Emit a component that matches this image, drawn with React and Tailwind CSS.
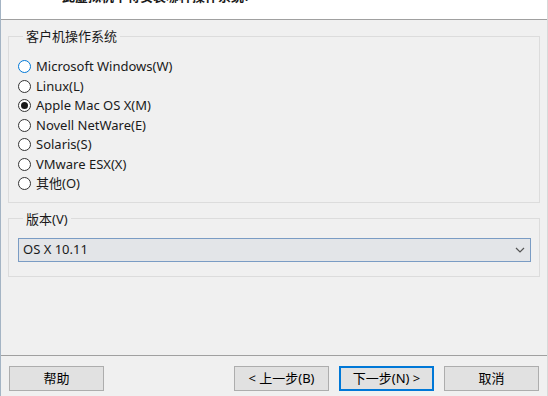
import React from "react";

const font = { fontFamily: '"Noto Sans", "Noto Sans CJK SC", sans-serif' };

function Radio({ label, checked, hover }) {
  return (
    <div className="flex items-center h-[19.5px]">
      <span
        className={`w-[13px] h-[13px] rounded-full border bg-white flex items-center justify-center ${
          hover ? "border-[#0078d7]" : "border-[#333333]"
        }`}
      >
        {checked && <span className="w-[7px] h-[7px] rounded-full bg-[#1a1a1a]" />}
      </span>
      <span className="ml-[5px] text-[13px] text-[#1a1a1a] leading-none">{label}</span>
    </div>
  );
}

function Btn({ children, primary }) {
  return (
    <button
      className={`w-[95px] h-[25px] bg-[#e1e1e1] text-[13px] text-black leading-none flex items-center justify-center ${
        primary ? "border-2 border-[#0078d7]" : "border border-[#adadad]"
      }`}
    >
      {children}
    </button>
  );
}

export default function App() {
  return (
    <div
      className="w-[548px] h-[396px] bg-[#f0f0f0] border-l border-[#a4b4c4] border-r border-r-[#d8d8d8] flex flex-col overflow-hidden"
      style={font}
    >
      <div className="h-[20px] bg-white border-b border-[#a0a0a0] overflow-hidden pl-[61px]">
        <div className="text-[13px] font-semibold text-[#1a1a1a] leading-[16px] -mt-[12px] whitespace-nowrap">
          此虚拟机中将安装哪种操作系统?
        </div>
      </div>

      <div className="px-[7px]">
        <fieldset className="mt-[8px] border border-[#dcdcdc] pl-[9px] pt-[13px] pb-[8px]">
          <legend className="ml-[5px] px-[3px] text-[13px] leading-[16px] text-[#1a1a1a]">
            客户机操作系统
          </legend>
          <Radio label="Microsoft Windows(W)" hover />
          <Radio label="Linux(L)" />
          <Radio label="Apple Mac OS X(M)" checked />
          <Radio label="Novell NetWare(E)" />
          <Radio label="Solaris(S)" />
          <Radio label="VMware ESX(X)" />
          <Radio label="其他(O)" />
        </fieldset>

        <fieldset className="mt-[8px] border border-[#dcdcdc] pl-[9px] pr-[8px] pt-[11px] pb-[14px]">
          <legend className="ml-[5px] px-[3px] text-[13px] leading-[16px] text-[#1a1a1a]">
            版本(V)
          </legend>
          <div className="h-[24px] border border-[#7a9cc4] bg-[#e3e5e8] flex items-center justify-between pl-[4px] pr-[5px]">
            <span className="text-[13px] text-[#1a1a1a] leading-none">OS X 10.11</span>
            <svg width="10" height="6" viewBox="0 0 10 6" fill="none">
              <path d="M1 1 L5 5 L9 1" stroke="#555555" strokeWidth="1.2" />
            </svg>
          </div>
        </fieldset>
      </div>

      <div className="flex-1" />

      <div className="border-t border-[#a0a0a0] h-[41px] flex items-start pt-[10px] pl-[8px] pr-[8px]">
        <Btn>帮助</Btn>
        <div className="flex-1" />
        <Btn>&lt; 上一步(B)</Btn>
        <div className="w-[10px]" />
        <Btn primary>下一步(N) &gt;</Btn>
        <div className="w-[10px]" />
        <Btn>取消</Btn>
      </div>
    </div>
  );
}
